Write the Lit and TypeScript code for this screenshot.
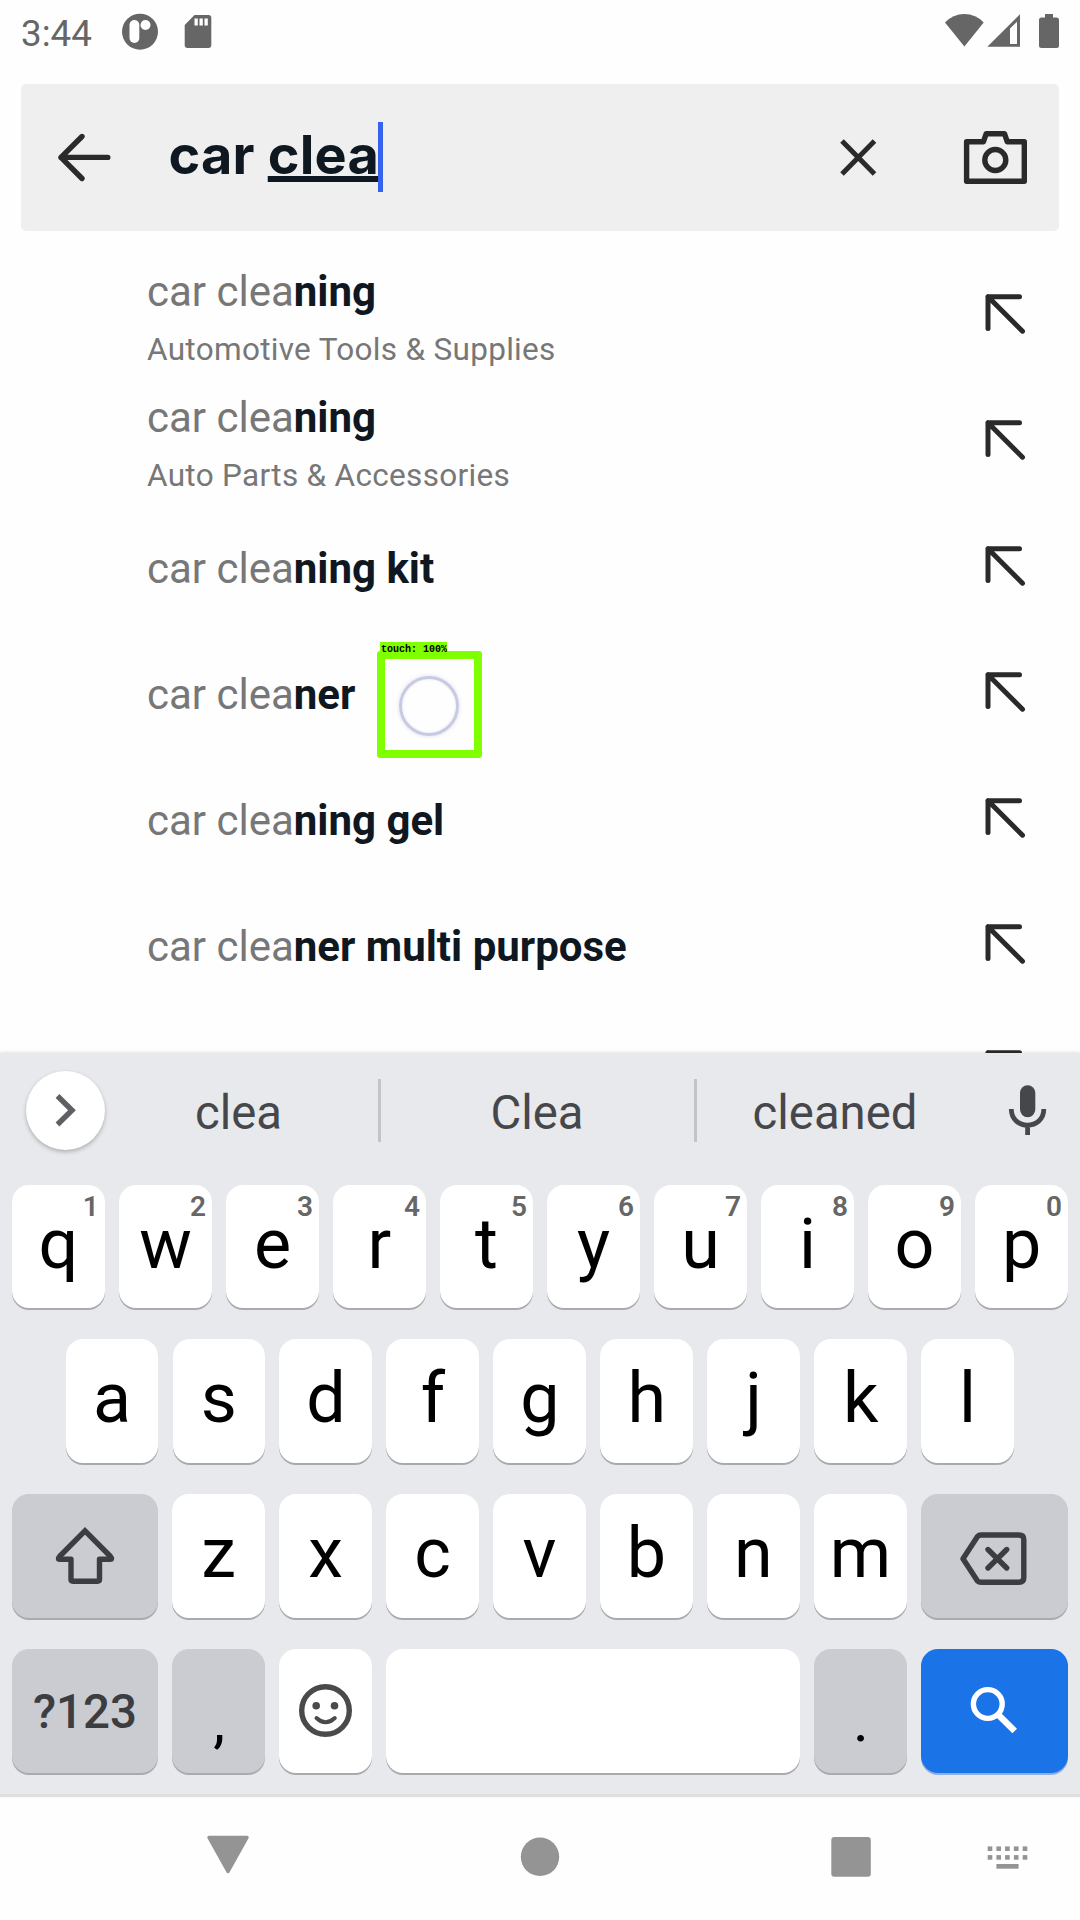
import { LitElement, html, css, svg, nothing } from "lit";
import { customElement, property } from "lit/decorators.js";

@customElement("status-bar")
class StatusBar extends LitElement {
  static styles = css`
    :host { display: flex; height: 84px; box-sizing: border-box; padding: 0 21px; justify-content: space-between; color: #666; }
    .left, .right { display: flex; align-items: flex-start; }
    .time { font: 400 36.75px/68px Roboto, sans-serif; width: 98px; }
    svg { display: block; height: 64px; }
  `;
  render() {
    return html`
      <div class="left">
        <span class="time">3:44</span>
        <svg width="100" height="64" viewBox="119 0 100 64" fill="#666">
          <circle cx="140" cy="31.7" r="18" />
          <rect x="129.5" y="20" width="9.8" height="23" rx="4.9" fill="#fff" />
          <circle cx="145.5" cy="25" r="5" fill="#fff" />
          <path d="M194.5 15H208.500Q211.300 15 211.300 18V45Q211.300 48 208.500 48H187.500Q184.700 48 184.700 45V25Z" />
          <path d="M194.500 18.500h3.300v7h-3.300zM199.500 18.500h3.300v7h-3.300zM204.500 18.500h3.300v7h-3.300z" fill="#fff" />
        </svg>
      </div>
      <div class="right">
        <svg width="119" height="64" viewBox="940 0 119 64" fill="#666">
          <path d="M964.400 46.500L945 22.500Q953 14 964.400 14T983.700 22.500Z" />
          <path fill-rule="evenodd" d="M987.300 46.800L1020 14.300V46.800ZM1010 28.500V44H1017V21.800Z" />
          <path d="M1045 14H1053V17.500H1056.500Q1059 17.500 1059 20V45.500Q1059 48 1056.500 48H1041.500Q1039 48 1039 45.500V20Q1039 17.500 1041.500 17.500H1045Z" />
        </svg>
      </div>
    `;
  }
}

@customElement("search-bar")
class SearchBar extends LitElement {
  static styles = css`
    :host { display: flex; height: 147px; margin: 0 21px; border-radius: 5px; background: #efefef; }
    .icon { display: block; flex: none; }
    .query { flex: 1; display: flex; align-items: flex-start; padding-left: 0.5px; font: 650 54px/141px Inter, sans-serif; letter-spacing: 0.2px; color: #0f1720; white-space: pre; }
    .typed { text-decoration: underline; text-decoration-thickness: 6px; text-underline-offset: 2px; text-decoration-skip-ink: none; }
    .caret { width: 5px; height: 70px; margin-top: 38px; margin-left: -1px; background: #3662ec; }
  `;
  render() {
    return html`
      <svg class="icon" width="147" height="147" viewBox="21 84 147 147" fill="none" stroke="#2a2a2a" stroke-width="5.400" stroke-linecap="round" stroke-linejoin="round">
        <path d="M107.800 157.400H61M82 136.500L61 157.400L82 178.500" />
      </svg>
      <div class="query"><span>car </span><span class="typed">clea</span><span class="caret"></span></div>
      <svg class="icon" width="239" height="147" viewBox="820 84 239 147" fill="none" stroke="#2a2a2a" stroke-width="5.400">
        <path d="M842 141L874.500 174M874.500 141L842 174" stroke-width="5" />
        <path stroke-linejoin="round" d="M966.600 141.700H983.500L986.200 133.700H1004.500L1007.200 141.700H1024.300V181.300H966.600Z" />
        <circle cx="995.300" cy="160" r="10.500" />
      </svg>
    `;
  }
}

@customElement("suggestion-row")
class SuggestionRow extends LitElement {
  @property() typed = "";
  @property() rest = "";
  @property() category = "";
  static styles = css`
    :host { display: flex; justify-content: space-between; height: 126px; padding: 0 54px 0 147px; font-family: Roboto, sans-serif; }
    .text { display: flex; flex-direction: column; padding-top: 13px; white-space: pre; }
    .text.single { padding-top: 38px; }
    .title { font-size: 42px; line-height: 56px; color: #777; }
    .rest { font-weight: 700; color: #0f1720; }
    .category { font-size: 31.5px; letter-spacing: 0.31px; line-height: 60px; color: #777; }
    .fill { display: block; margin-top: 43px; }
  `;
  render() {
    return html`
      <div class="text ${this.category ? "" : "single"}">
        <div class="title">${this.typed}<span class="rest">${this.rest}</span></div>
        ${this.category ? html`<div class="category">${this.category}</div>` : nothing}
      </div>
      <svg class="fill" width="41" height="41" viewBox="0 0 41 41" fill="none" stroke="#2a2a2a" stroke-width="5" stroke-linecap="round" stroke-linejoin="round">
        <path d="M3 34.500V2.700H34.500M3 2.700L37.500 37.200" />
      </svg>
    `;
  }
}

@customElement("key-cap")
class KeyCap extends LitElement {
  @property() label = "";
  @property() hint = "";
  @property() icon = "";
  static styles = css`
    :host { display: block; position: relative; min-width: 0; border-radius: 17px; background: #fff; box-shadow: 0 2px 0 #a9aaae; text-align: center; font-family: Roboto, sans-serif; color: #000; }
    :host([tone="grey"]) { background: #cbccd1; }
    :host([tone="blue"]) { background: #1b73e8; box-shadow: 0 2px 0 #8fb0dd; }
    .label { font-size: 70px; line-height: 118px; }
    :host([kind="mode"]) .label { font-size: 47.5px; font-weight: 500; line-height: 126px; color: #3c3d41; }
    :host([kind="mark"]) .label { font-size: 60px; line-height: 143px; padding-left: 1px; }
    .hint { position: absolute; right: 6px; top: 5px; font-size: 28px; font-weight: 600; line-height: 34px; color: #666; }
    svg { display: block; margin: 0 auto; }
  `;
  private glyph() {
    switch (this.icon) {
      case "shift":
        return html`<svg width="146" height="124" viewBox="12 1494 146 124" fill="none" stroke="#3c3d41" stroke-width="5.400" stroke-linejoin="round">
          <path stroke-linejoin="miter" d="M59.500 1556.500L85 1530.800L110.500 1556.500" />
          <path d="M60 1556Q57 1559.300 60 1559.300H71V1579.500Q71 1581.200 73 1581.200H97.500Q99.500 1581.200 99.500 1579.500V1559.300H110Q113 1559.300 110 1556" />
        </svg>`;
      case "delete":
        return html`<svg width="147" height="124" viewBox="921 1494 147 124" fill="none" stroke="#3c3d41" stroke-width="5.400" stroke-linejoin="round" stroke-linecap="round">
          <path d="M963 1558.800L977.500 1536.500Q978.800 1535 981 1535H1019Q1023.800 1535 1023.800 1539.500V1577.700Q1023.800 1582.200 1019 1582.200H981Q978.800 1582.200 977.500 1581Z" />
          <path d="M988 1549.500L1006.700 1568M1006.700 1549.500L988 1568" />
        </svg>`;
      case "emoji":
        return html`<svg width="93" height="124" viewBox="279 1649 93 124" fill="none" stroke="#4a4a4a" stroke-width="5.400">
          <circle cx="325.500" cy="1710.500" r="23.800" />
          <circle cx="316.200" cy="1705.700" r="3.800" fill="#4a4a4a" stroke="none" />
          <circle cx="334.500" cy="1705.700" r="3.800" fill="#4a4a4a" stroke="none" />
          <path stroke-width="4" stroke-linecap="round" d="M316.500 1718Q325.500 1726.500 334.800 1718" />
        </svg>`;
      case "search":
        return html`<svg width="147" height="124" viewBox="921 1649 147 124" fill="none" stroke="#fff" stroke-width="5.400">
          <circle cx="987.800" cy="1704" r="14.400" />
          <path stroke-width="6.500" d="M998 1714.500L1014.700 1731" />
        </svg>`;
      default:
        return nothing;
    }
  }
  render() {
    return html`
      ${this.hint ? html`<span class="hint">${this.hint}</span>` : nothing}
      ${this.icon ? this.glyph() : html`<div class="label">${this.label}</div>`}
    `;
  }
}

@customElement("soft-keyboard")
class SoftKeyboard extends LitElement {
  static styles = css`
    :host { display: flex; flex-direction: column; height: 741px; background: #e8e9ed; border-bottom: 3px solid #e0e0e0; box-shadow: 0 -1px 3px rgba(0, 0, 0, 0.1); font-family: Roboto, sans-serif; position: relative; }
    .strip { display: flex; height: 132px; box-sizing: border-box; padding-left: 26px; }
    .expand { width: 79px; height: 79px; margin-top: 18px; border-radius: 50%; background: #fff; box-shadow: 0 2px 4px rgba(0, 0, 0, 0.25); }
    .words { display: grid; grid-template-columns: 274px 316px 277px; margin-left: -1.5px; }
    .word { font-size: 47.25px; line-height: 121px; text-align: center; color: #46474b; }
    .word:first-child { padding-right: 4px; }
    .word:last-child { padding-left: 3px; }
    .rule { border-left: 3px solid #c3c4c8; height: 63px; margin-top: 26px; line-height: 69px; }
    .mic { display: block; }
    .keys { display: flex; flex-direction: column; gap: 31px; }
    .row { display: grid; height: 124px; column-gap: 14.15px; padding: 0 12px; grid-template-columns: repeat(10, minmax(0, 1fr)); grid-template-rows: 100%; }
    .top { height: 123px; }
    .home { padding: 0 66px 0 65.6px; grid-template-columns: repeat(9, minmax(0, 1fr)); }
    .third { grid-template-columns: 146px repeat(7, minmax(0, 1fr)) 147px; }
    .bottom { grid-template-columns: 146px 93px 93px minmax(0, 1fr) 93px 147px; }
  `;
  render() {
    return html`
      <div class="strip">
        <div class="expand">
          <svg width="79" height="79" viewBox="26 1071 79 79" fill="none" stroke="#5f6063" stroke-width="5.400">
            <path stroke-linecap="butt" d="M57.500 1096L72 1110.200L57.500 1124.500" />
          </svg>
        </div>
        <div class="words">
          <div class="word">clea</div>
          <div class="word rule">Clea</div>
          <div class="word rule">cleaned</div>
        </div>
        <svg class="mic" width="108" height="132" viewBox="971 1053 108 132" fill="none" stroke="#46474b" stroke-width="4.800">
          <rect x="1020" y="1085.200" width="15.300" height="32" rx="7.600" fill="#46474b" stroke="none" />
          <path d="M1011.300 1109C1011.300 1130.500 1043.800 1130.500 1043.800 1109M1027.600 1125V1135" />
        </svg>
      </div>
      <div class="keys">
        <div class="row top">
          ${[..."qwertyuiop"].map((k, i) => html`<key-cap .label=${k} .hint=${String((i + 1) % 10)}></key-cap>`)}
        </div>
        <div class="row home">${[..."asdfghjkl"].map((k) => html`<key-cap .label=${k}></key-cap>`)}</div>
        <div class="row third">
          <key-cap tone="grey" icon="shift"></key-cap>
          ${[..."zxcvbnm"].map((k) => html`<key-cap .label=${k}></key-cap>`)}
          <key-cap tone="grey" icon="delete"></key-cap>
        </div>
        <div class="row bottom">
          <key-cap tone="grey" kind="mode" label="?123"></key-cap>
          <key-cap tone="grey" kind="mark" label=","></key-cap>
          <key-cap icon="emoji"></key-cap>
          <key-cap></key-cap>
          <key-cap tone="grey" kind="mark" label="."></key-cap>
          <key-cap tone="blue" icon="search"></key-cap>
        </div>
      </div>
    `;
  }
}

@customElement("nav-bar")
class NavBar extends LitElement {
  static styles = css`
    :host { display: block; height: 123px; }
    svg { display: block; }
  `;
  render() {
    const dots = [987.7, 996.4, 1005.1, 1013.9, 1022.7];
    return html`
      <svg width="1080" height="123" viewBox="0 1797 1080 123" fill="#949494">
        <path d="M209 1837.500H247L228 1871.500Z" stroke="#949494" stroke-width="3.500" stroke-linejoin="round" />
        <circle cx="540" cy="1856.800" r="19.200" />
        <rect x="831.300" y="1837" width="39.500" height="39.700" rx="3" />
        ${[1846.4, 1855.1].map((y) => dots.map((x) => svg`<rect x=${x} y=${y} width="4.600" height="4.600" />`))}
        <rect x="996.400" y="1864" width="22.200" height="4.700" />
      </svg>
    `;
  }
}

@customElement("app-root")
class AppRoot extends LitElement {
  static styles = css`
    :host { display: flex; flex-direction: column; position: relative; width: 1080px; height: 1920px; overflow: hidden; background: #fefefe; }
    .list { height: 802px; padding-top: 20px; overflow: hidden; }
    .detection { position: absolute; left: 377px; top: 651px; width: 105px; height: 107px; box-sizing: border-box; border: 8px solid #80ff00; border-radius: 3px; }
    .tag { position: absolute; left: -5px; top: -17px; width: 67px; height: 12px; background: #80ff00; color: #000; font: 700 10px/15px "Liberation Mono", monospace; text-indent: 1px; white-space: pre; }
    .touch { position: absolute; left: 14px; top: 17px; width: 60px; height: 60px; box-sizing: border-box; border: 3px solid #c8cae4; border-radius: 50%; box-shadow: 0 0 4px #dcdcf0, inset 0 0 3px #e6e6f5; }
  `;
  render() {
    const rows = [
      ["ning", "Automotive Tools & Supplies"],
      ["ning", "Auto Parts & Accessories"],
      ["ning kit", ""],
      ["ner", ""],
      ["ning gel", ""],
      ["ner multi purpose", ""],
    ];
    return html`
      <status-bar></status-bar>
      <search-bar></search-bar>
      <div class="list">
        ${rows.map(([rest, category]) => html`<suggestion-row typed="car clea" .rest=${rest} .category=${category}></suggestion-row>`)}
        <suggestion-row></suggestion-row>
      </div>
      <soft-keyboard></soft-keyboard>
      <nav-bar></nav-bar>
      <div class="detection">
        <div class="tag">touch: 100%</div>
        <div class="touch"></div>
      </div>
    `;
  }
}
